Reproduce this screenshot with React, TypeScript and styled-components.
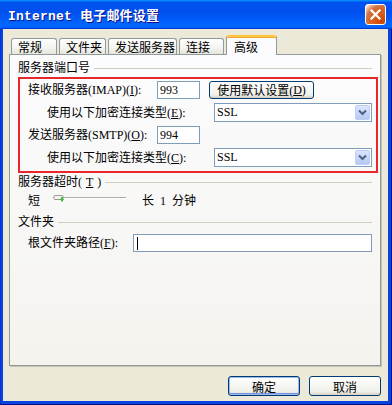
import styled, { createGlobalStyle } from "styled-components";

const GlobalStyle = createGlobalStyle`
  html, body {
    margin: 0;
    padding: 0;
    background: #ffffff;
  }
  body {
    font-family: "Liberation Serif", "Noto Sans CJK SC", serif;
    font-size: 12px;
    color: #000000;
  }
  u {
    text-decoration: underline;
    text-underline-offset: 1px;
  }
`;

const tabs = [
  { label: "常规", width: 46 },
  { label: "文件夹", width: 47 },
  { label: "发送服务器", width: 69 },
  { label: "连接", width: 45 },
  { label: "高级", width: 51, active: true },
];

const App = () => {
  return (
    <>
      <GlobalStyle />
      <Window>
        <TitleBar>
          <Title>Internet 电子邮件设置</Title>
          <CloseButton>
            <svg width="11" height="11" viewBox="0 0 11 11">
              <path d="M1.5 1.5 L9.5 9.5 M9.5 1.5 L1.5 9.5" stroke="#fff" strokeWidth="2.2" strokeLinecap="square" />
            </svg>
          </CloseButton>
        </TitleBar>
        <Frame>
          <TabStrip>
            {tabs.map((t) => (
              <Tab key={t.label} $w={t.width} $active={!!t.active}>
                {t.label}
              </Tab>
            ))}
          </TabStrip>
          <Panel>
            <GroupHeader>服务器端口号</GroupHeader>
            <Highlight>
              <PortRow $indent={8}>
                <Label $w={129}>
                  接收服务器(IMAP)(<u>I</u>):
                </Label>
                <Field $w={43}>993</Field>
                <PushButton $w={105}>
                  使用默认设置(<u>D</u>)
                </PushButton>
              </PortRow>
              <PortRow $indent={27} $tall>
                <Label $w={167}>
                  使用以下加密连接类型(<u>E</u>):
                </Label>
                <Select />
              </PortRow>
              <PortRow $indent={8}>
                <Label $w={129}>
                  发送服务器(SMTP)(<u>O</u>):
                </Label>
                <Field $w={43}>994</Field>
              </PortRow>
              <PortRow $indent={27} $tall>
                <Label $w={167}>
                  使用以下加密连接类型(<u>C</u>):
                </Label>
                <Select />
              </PortRow>
            </Highlight>
            <GroupHeader $gap={2}>
              服务器超时(<u>T</u>)
            </GroupHeader>
            <SliderRow>
              <Label $w={25}>短</Label>
              <Slider />
              <Label>长 1 分钟</Label>
            </SliderRow>
            <GroupHeader $gap={5}>文件夹</GroupHeader>
            <PathRow>
              <Label $w={105}>
                根文件夹路径(<u>F</u>):
              </Label>
              <Field>
                <Caret />
              </Field>
            </PathRow>
          </Panel>
          <ButtonRow>
            <DialogButton $default>确定</DialogButton>
            <DialogButton>取消</DialogButton>
          </ButtonRow>
        </Frame>
      </Window>
    </>
  );
};

export default App;

const Select = () => (
  <SelectBox>
    <span>SSL</span>
    <DropArrow>
      <svg width="9" height="7" viewBox="0 0 9 7">
        <path d="M1 1.5 L4.5 5 L8 1.5" fill="none" stroke="#4d6185" strokeWidth="2" />
      </svg>
    </DropArrow>
  </SelectBox>
);

const Slider = () => (
  <SliderTrack>
    <svg width="73" height="18" viewBox="0 0 73 18">
      <rect x="0" y="5" width="73" height="1" fill="#b0aea4" />
      <rect x="0" y="6" width="73" height="1" fill="#ffffff" />
      <rect x="1" y="3.5" width="9" height="4" rx="1" fill="#f4f3ee" stroke="#9e9b8d" strokeWidth="1" />
      <path d="M7 7 L11 7 L9 10 Z" fill="#21a121" />
      <rect x="8" y="5" width="2" height="4" fill="#3dbb3d" />
    </svg>
  </SliderTrack>
);

const Window = styled.div`
  width: 392px;
  height: 405px;
  display: flex;
  flex-direction: column;
  background: #0843dd;
  box-shadow: inset -1px -1px #00138c, inset 1px 0 #0831d9;
`;

const TitleBar = styled.div`
  height: 29px;
  flex: none;
  display: flex;
  align-items: center;
  justify-content: space-between;
  padding: 0 6px 0 8px;
  background: linear-gradient(
    180deg,
    #0997ff,
    #0053ee 8%,
    #0050ee 40%,
    #0066ff 88%,
    #0066ff 93%,
    #005bff 95%,
    #003dd7 96%,
    #003dd7
  );
`;

const Title = styled.div`
  font-family: "Liberation Mono", "Noto Sans CJK SC", monospace;
  font-weight: bold;
  font-size: 13px;
  color: #ffffff;
  text-shadow: 1px 1px #0f1089;
  letter-spacing: 0.2px;
`;

const CloseButton = styled.div`
  width: 19px;
  height: 19px;
  border: 1px solid #ffffff;
  border-radius: 3px;
  display: flex;
  align-items: center;
  justify-content: center;
  background-image: radial-gradient(
    circle at 90% 90%,
    #cc4600 0%,
    #dc6527 55%,
    #cd7546 70%,
    #ffccb2 90%,
    #ffffff 100%
  );
`;

const Frame = styled.div`
  flex: 1;
  display: flex;
  flex-direction: column;
  margin: 0 4px 4px 3px;
  padding: 6px 7px 5px 6px;
  background: #ece9d8;
`;

const TabStrip = styled.div`
  height: 19px;
  flex: none;
  display: flex;
  align-items: flex-end;
  padding-left: 2px;
  position: relative;
  z-index: 1;
`;

const Tab = styled.div<{ $w: number; $active?: boolean }>`
  box-sizing: border-box;
  width: ${(p) => p.$w}px;
  height: ${(p) => (p.$active ? 20 : 16)}px;
  margin-right: 2px;
  margin-bottom: ${(p) => (p.$active ? -1 : 0)}px;
  padding-left: ${(p) => (p.$active ? 7 : 6)}px;
  display: flex;
  align-items: center;
  font-family: "Noto Sans CJK SC", sans-serif;
  font-size: 12px;
  border: 1px solid #919b9c;
  border-bottom: none;
  border-radius: 3px 3px 0 0;
  background: ${(p) =>
    p.$active ? "#fcfcfe" : "linear-gradient(180deg, #ffffff, #f3f3ef 60%, #e6e5dd)"};
  ${(p) =>
    p.$active &&
    `border-top: 2px solid #ffc83c;
     box-shadow: inset 0 1px #f5a83a;`}
`;

const Panel = styled.div`
  flex: 1;
  display: flex;
  flex-direction: column;
  padding: 6px 8px 0 8px;
  border: 1px solid #919b9c;
  box-shadow: 1px 1px #c5c2b2;
  background: linear-gradient(180deg, #fcfcfe, #f4f3ee);
`;

const GroupHeader = styled.div<{ $gap?: number }>`
  height: 14px;
  margin-top: ${(p) => p.$gap ?? 0}px;
  display: flex;
  align-items: center;
  gap: 4px;
  line-height: 14px;
  white-space: nowrap;

  &::after {
    content: "";
    flex: 1;
    height: 1px;
    background: #d0d0bf;
  }
`;

const Highlight = styled.div`
  margin: 2px -6px 0 0;
  padding: 2px 0 4px;
  border: 2px solid #e8262b;
  display: flex;
  flex-direction: column;
  gap: 4px;
`;

const PortRow = styled.div<{ $indent: number; $tall?: boolean }>`
  height: ${(p) => (p.$tall ? 19 : 18)}px;
  display: flex;
  align-items: center;
  padding-left: ${(p) => p.$indent}px;
`;

const Label = styled.div<{ $w?: number }>`
  flex: none;
  width: ${(p) => (p.$w ? `${p.$w}px` : "auto")};
  white-space: nowrap;
  line-height: 14px;
  word-spacing: 3px;
`;

const Field = styled.div<{ $w?: number }>`
  box-sizing: border-box;
  ${(p) => (p.$w ? `width: ${p.$w}px; flex: none;` : "flex: 1;")}
  height: 18px;
  padding-left: 2px;
  display: flex;
  align-items: center;
  border: 1px solid #7f9db9;
  background: #ffffff;
`;

const Caret = styled.span`
  width: 1px;
  height: 13px;
  background: #000000;
  margin-left: 1px;
`;

const PushButton = styled.div<{ $w: number }>`
  box-sizing: border-box;
  width: ${(p) => p.$w}px;
  height: 18px;
  margin-left: 9px;
  display: flex;
  align-items: center;
  justify-content: center;
  border: 1px solid #003c74;
  border-radius: 3px;
  background: linear-gradient(180deg, #ffffff, #f0f0ea 80%, #d6d0c5);
  white-space: nowrap;
`;

const SelectBox = styled.div`
  box-sizing: border-box;
  width: 158px;
  height: 19px;
  padding-left: 2px;
  display: flex;
  align-items: center;
  justify-content: space-between;
  border: 1px solid #7f9db9;
  background: #ffffff;
`;

const DropArrow = styled.div`
  box-sizing: border-box;
  width: 15px;
  height: 15px;
  margin-right: 1px;
  display: flex;
  align-items: center;
  justify-content: center;
  border: 1px solid #bccdf3;
  border-radius: 2px;
  background: linear-gradient(180deg, #dce6fd, #b5c9f5);
`;

const SliderRow = styled.div`
  height: 18px;
  margin-top: 3px;
  padding-left: 10px;
  display: flex;
  align-items: center;
`;

const SliderTrack = styled.div`
  width: 73px;
  height: 18px;
  margin-right: 16px;
  flex: none;
`;

const PathRow = styled.div`
  height: 18px;
  margin-top: 5px;
  padding-left: 10px;
  display: flex;
  align-items: center;
`;

const ButtonRow = styled.div`
  height: 20px;
  flex: none;
  margin-top: 10px;
  display: flex;
  justify-content: flex-end;
  gap: 9px;
`;

const DialogButton = styled.div<{ $default?: boolean }>`
  box-sizing: border-box;
  width: 72px;
  height: 20px;
  display: flex;
  align-items: center;
  justify-content: center;
  font-family: "Noto Sans CJK SC", sans-serif;
  font-size: 12px;
  border: 1px solid #003c74;
  border-radius: 3px;
  background: linear-gradient(180deg, #ffffff, #f0f0ea 80%, #d6d0c5);
  box-shadow: ${(p) =>
    p.$default ? "inset 0 0 0 1px #9db7f0, inset 0 -1px 0 1px #7897e0" : "none"};
`;
